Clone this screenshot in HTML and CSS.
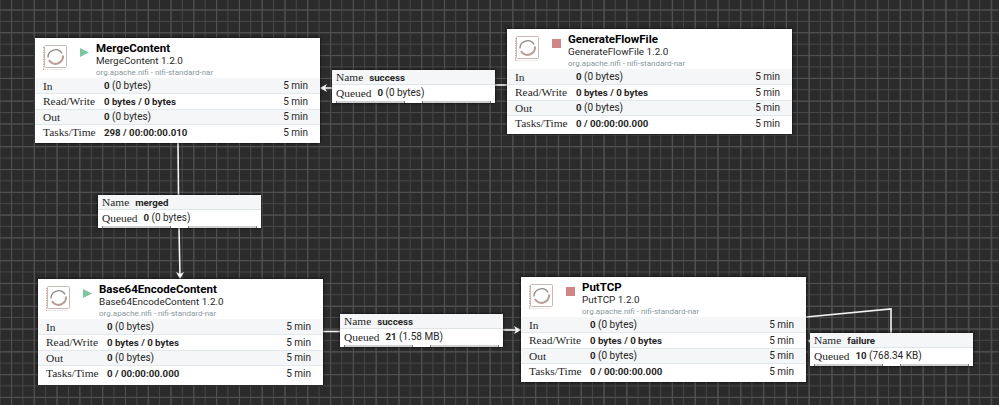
FILE: index.html
```html
<!DOCTYPE html>
<html lang="en">
<head>
    <meta charset="UTF-8">
    <title>NiFi Flow</title>
    <link rel="stylesheet" href="styles.css">
</head>
<body>
    <div class="canvas">
        <svg class="connections" width="999" height="405" viewBox="0 0 999 405">
            <defs>
                <symbol id="proc-icon" viewBox="0 0 24 25">
                    <rect x="1.500" y="0.500" width="22" height="22" rx="1" fill="#fff" stroke="#c9b9b5" stroke-width="1"/>
                    <path d="M0.500 2v23h21" fill="none" stroke="#c4a9a2" stroke-width="1.200" stroke-dasharray="1.200 1.200"/>
                    <path d="M5 12.500a7.500 7.500 0 0 1 14-4" fill="none" stroke="#8f8a88" stroke-width="1.300"/>
                    <path d="M20 10.500a7.500 7.500 0 0 1-14 4.500" fill="none" stroke="#b8a098" stroke-width="2.200"/>
                </symbol>
            </defs>
            <g class="wire">
                <path d="M507 85H495"/>
                <path d="M332 88H322"/>
                <path d="M178 143L178.500 195"/>
                <path d="M179 228L180 277"/>
                <path d="M323 331.500H340"/>
                <path d="M503 330H519"/>
                <path d="M806 317L891 309V333"/>
            </g>
            <g class="wire-head">
                <path d="M320 88L327 84L325 88L327 92Z"/>
                <path d="M180 279L176 272L180 274L184 272Z"/>
                <path d="M521 330L514 326L516 330L514 334Z"/>
                <path d="M808 341L811 338V344Z"/>
            </g>
        </svg>

        <div class="node node-merge">
            <div class="node-head">
                <svg class="proc-icon" width="24" height="25"><use href="#proc-icon"/></svg>
                <span class="run-state running"></span>
                <div class="node-title">
                    <div class="name">MergeContent</div>
                    <div class="type">MergeContent 1.2.0</div>
                    <div class="bundle">org.apache.nifi - nifi-standard-nar</div>
                </div>
            </div>
            <div class="stat"><span class="stat-label">In</span><span class="stat-value"><b>0</b> (0 bytes)</span><span class="stat-time">5 min</span></div>
            <div class="stat"><span class="stat-label">Read/Write</span><span class="stat-value"><b>0 bytes / 0 bytes</b></span><span class="stat-time">5 min</span></div>
            <div class="stat"><span class="stat-label">Out</span><span class="stat-value"><b>0</b> (0 bytes)</span><span class="stat-time">5 min</span></div>
            <div class="stat"><span class="stat-label">Tasks/Time</span><span class="stat-value"><b>298 / 00:00:00.010</b></span><span class="stat-time">5 min</span></div>
        </div>

        <div class="node node-generate">
            <div class="node-head">
                <svg class="proc-icon" width="24" height="25"><use href="#proc-icon"/></svg>
                <span class="run-state stopped"></span>
                <div class="node-title">
                    <div class="name">GenerateFlowFile</div>
                    <div class="type">GenerateFlowFile 1.2.0</div>
                    <div class="bundle">org.apache.nifi - nifi-standard-nar</div>
                </div>
            </div>
            <div class="stat"><span class="stat-label">In</span><span class="stat-value"><b>0</b> (0 bytes)</span><span class="stat-time">5 min</span></div>
            <div class="stat"><span class="stat-label">Read/Write</span><span class="stat-value"><b>0 bytes / 0 bytes</b></span><span class="stat-time">5 min</span></div>
            <div class="stat"><span class="stat-label">Out</span><span class="stat-value"><b>0</b> (0 bytes)</span><span class="stat-time">5 min</span></div>
            <div class="stat"><span class="stat-label">Tasks/Time</span><span class="stat-value"><b>0 / 00:00:00.000</b></span><span class="stat-time">5 min</span></div>
        </div>

        <div class="node node-base64">
            <div class="node-head">
                <svg class="proc-icon" width="24" height="25"><use href="#proc-icon"/></svg>
                <span class="run-state running"></span>
                <div class="node-title">
                    <div class="name">Base64EncodeContent</div>
                    <div class="type">Base64EncodeContent 1.2.0</div>
                    <div class="bundle">org.apache.nifi - nifi-standard-nar</div>
                </div>
            </div>
            <div class="stat"><span class="stat-label">In</span><span class="stat-value"><b>0</b> (0 bytes)</span><span class="stat-time">5 min</span></div>
            <div class="stat"><span class="stat-label">Read/Write</span><span class="stat-value"><b>0 bytes / 0 bytes</b></span><span class="stat-time">5 min</span></div>
            <div class="stat"><span class="stat-label">Out</span><span class="stat-value"><b>0</b> (0 bytes)</span><span class="stat-time">5 min</span></div>
            <div class="stat"><span class="stat-label">Tasks/Time</span><span class="stat-value"><b>0 / 00:00:00.000</b></span><span class="stat-time">5 min</span></div>
        </div>

        <div class="node node-puttcp">
            <div class="node-head">
                <svg class="proc-icon" width="24" height="25"><use href="#proc-icon"/></svg>
                <span class="run-state stopped"></span>
                <div class="node-title">
                    <div class="name">PutTCP</div>
                    <div class="type">PutTCP 1.2.0</div>
                    <div class="bundle">org.apache.nifi - nifi-standard-nar</div>
                </div>
            </div>
            <div class="stat"><span class="stat-label">In</span><span class="stat-value"><b>0</b> (0 bytes)</span><span class="stat-time">5 min</span></div>
            <div class="stat"><span class="stat-label">Read/Write</span><span class="stat-value"><b>0 bytes / 0 bytes</b></span><span class="stat-time">5 min</span></div>
            <div class="stat"><span class="stat-label">Out</span><span class="stat-value"><b>0</b> (0 bytes)</span><span class="stat-time">5 min</span></div>
            <div class="stat"><span class="stat-label">Tasks/Time</span><span class="stat-value"><b>0 / 00:00:00.000</b></span><span class="stat-time">5 min</span></div>
        </div>

        <div class="conn conn-success1">
            <div class="conn-name"><span class="stat-label">Name</span><b>success</b></div>
            <div class="conn-queue"><span class="stat-label">Queued</span><span><b>0</b> (0 bytes)</span></div>
            <div class="conn-bars"><i></i><i></i></div>
        </div>
        <div class="conn conn-merged">
            <div class="conn-name"><span class="stat-label">Name</span><b>merged</b></div>
            <div class="conn-queue"><span class="stat-label">Queued</span><span><b>0</b> (0 bytes)</span></div>
            <div class="conn-bars"><i></i><i></i></div>
        </div>
        <div class="conn conn-success2">
            <div class="conn-name"><span class="stat-label">Name</span><b>success</b></div>
            <div class="conn-queue"><span class="stat-label">Queued</span><span><b>21</b> (1.58 MB)</span></div>
            <div class="conn-bars"><i></i><i></i></div>
        </div>
        <div class="conn conn-failure">
            <div class="conn-name"><span class="stat-label">Name</span><b>failure</b></div>
            <div class="conn-queue"><span class="stat-label">Queued</span><span><b>10</b> (768.34 KB)</span></div>
            <div class="conn-bars"><i></i><i></i></div>
        </div>
    </div>
</body>
</html>
```

FILE: styles.css
```css
* {
    margin: 0;
    padding: 0;
    box-sizing: border-box;
}

body {
    width: 999px;
    height: 405px;
    overflow: hidden;
    background: #2b2b2b;
    font-family: Roboto, sans-serif;
    color: #262626;
}

.canvas {
    position: relative;
    width: 999px;
    height: 405px;
    background-color: #2b2b2b;
    background-image:
        linear-gradient(to right, #525252 1px, transparent 1px),
        linear-gradient(to bottom, #525252 1px, transparent 1px),
        linear-gradient(to right, #484848 1px, transparent 1px),
        linear-gradient(to bottom, #484848 1px, transparent 1px);
    background-size: 22.8px 22.8px, 22.8px 22.8px, 11.4px 11.4px, 11.4px 11.4px;
    background-position: 11px 9.500px, 11px 9.500px, 11px 9.500px, 11px 9.500px;
}

.connections {
    position: absolute;
    left: 0;
    top: 0;
}

.wire path {
    fill: none;
    stroke: #f4f4f4;
    stroke-width: 1.600;
}

.wire-head path {
    fill: #f8f8f8;
}

/* processor nodes */
.node {
    position: absolute;
    width: 285px;
    height: 105px;
    background: #fff;
    box-shadow: 0 0 3px rgba(0, 0, 0, 0.8);
}

.node-merge { left: 35px; top: 38px; }
.node-generate { left: 507px; top: 29px; }
.node-base64 { left: 38px; top: 279px; height: 106px; }
.node-puttcp { left: 521px; top: 277px; }

.node-head {
    display: flex;
    align-items: flex-start;
    height: 40px;
    padding: 4px 0 0 8px;
}

.proc-icon {
    flex: none;
    margin-top: 3px;
}

.run-state {
    flex: none;
    margin: 6px 8px 0 13px;
    width: 9px;
    height: 9px;
}

.run-state.running {
    background: #7dc7a0;
    clip-path: polygon(0 0, 100% 50%, 0 100%);
}

.run-state.stopped {
    background: #d18686;
}

.node-title {
    margin-left: -1px;
    line-height: 11px;
}

.name {
    font-size: 11.500px;
    font-weight: 700;
    color: #000;
    line-height: 13px;
}

.type {
    font-size: 9.900px;
    line-height: 12px;
}

.bundle {
    font-size: 8px;
    color: #8a979c;
}

.stat {
    display: grid;
    grid-template-columns: 61px 1fr auto;
    align-items: center;
    height: 15.300px;
    padding: 0 12px 0 8px;
    font-size: 10px;
    border-top: 1px solid #e3e8eb;
}

.node-head + .stat,
.stat:nth-child(4) {
    background: #f4f6f7;
}

.node-head + .stat {
    border-top: 0;
}

.stat-label {
    font-family: "Liberation Serif", serif;
    font-size: 11.400px;
    color: #262626;
}

.stat-value b,
.conn b {
    font-weight: 700;
    font-size: 9.700px;
}

/* connection labels */
.conn {
    position: absolute;
    width: 163px;
    height: 33px;
    background: #fff;
    font-size: 10px;
    box-shadow: 0 0 3px rgba(0, 0, 0, 0.8);
}

.conn-success1 { left: 332px; top: 70px; }
.conn-merged { left: 98px; top: 195px; }
.conn-success2 { left: 340px; top: 314px; }
.conn-failure { left: 810px; top: 333px; }

.conn-name,
.conn-queue {
    display: flex;
    align-items: center;
    gap: 6px;
    height: 15px;
    padding-left: 4px;
}

.conn-name {
    background: #f4f6f7;
    border-bottom: 1px solid #dfe4e7;
}

.conn-bars {
    display: flex;
    justify-content: space-between;
    margin-top: 0.500px;
    padding: 0 4px;
}

.conn-bars i {
    display: block;
    width: 69px;
    height: 2px;
    background: #cfcfcf;
    border-left: 1px solid #7a7a7a;
    border-right: 1px solid #7a7a7a;
}
```
